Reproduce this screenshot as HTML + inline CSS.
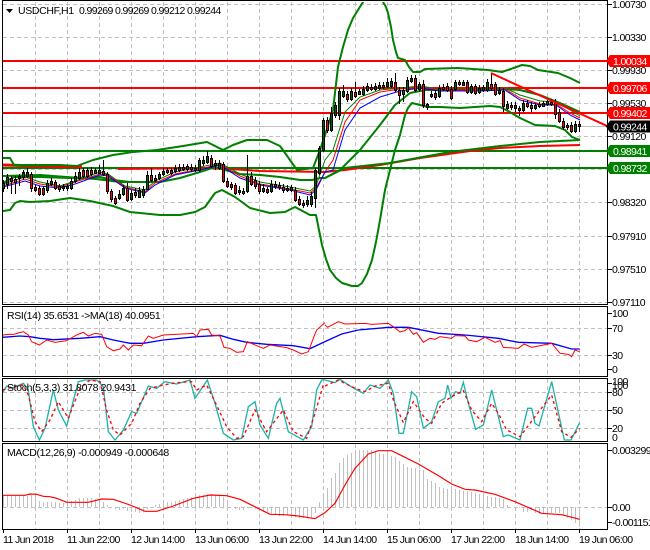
<!DOCTYPE html>
<html><head><meta charset="utf-8"><style>
html,body{margin:0;padding:0;background:#fff;width:650px;height:550px;overflow:hidden}
svg{display:block}
text{font-family:"Liberation Sans",sans-serif;font-size:10.5px;letter-spacing:-.6px;fill:#000}
.h{letter-spacing:-.35px}
.w{fill:#fff}
</style></head><body>
<svg width="650" height="550" viewBox="0 0 650 550" xmlns="http://www.w3.org/2000/svg" fill="none">
<defs>
<clipPath id="m"><rect x="3" y="2" width="604" height="301"/></clipPath>
<clipPath id="s"><rect x="3" y="379" width="604" height="62"/></clipPath>
<path id="up" d="M3.5 184V187M7.5 178V183M19.5 177V177M23.5 173V176M27.5 173V175M47.5 184V189M51.5 182V183M63.5 187V187M67.5 187V187M71.5 182V187M75.5 177V180M79.5 173V177M95.5 171V172M99.5 171V172M119.5 195V197M123.5 189V193M131.5 194V198M139.5 191V196M143.5 190V194M147.5 176V188M159.5 175V177M163.5 172V173M175.5 169V170M179.5 168V169M187.5 167V168M195.5 169V169M199.5 161V169M203.5 161V162M207.5 157V161M215.5 164V164M219.5 164V167M239.5 191V191M247.5 177V190M263.5 189V190M271.5 185V190M287.5 189V189M291.5 188V189M307.5 201V203M311.5 197V203M315.5 171V197M319.5 149V172M323.5 121V149M331.5 114V129M335.5 106V114M339.5 92V114M343.5 92V95M351.5 92V98M359.5 92V93M363.5 90V93M367.5 87V89M375.5 87V88M379.5 86V87M387.5 83V85M391.5 82V85M403.5 91V93M407.5 81V90M411.5 79V80M419.5 85V88M427.5 105V106M431.5 95V95M439.5 89V95M455.5 83V88M463.5 83V84M471.5 87V91M479.5 89V91M483.5 88V89M487.5 83V89M499.5 91V92M507.5 105V107M515.5 106V107M523.5 104V109M535.5 106V107M543.5 104V105M547.5 102V103M575.5 125V130"/>
<path id="dn" d="M11.5 179V180M15.5 180V181M31.5 175V187M35.5 188V189M39.5 189V193M43.5 189V193M55.5 183V187M59.5 187V188M83.5 171V175M87.5 171V175M91.5 171V173M103.5 172V173M107.5 175V190M111.5 192V198M115.5 199V202M127.5 189V199M135.5 193V194M151.5 176V179M155.5 179V179M167.5 171V171M171.5 171V172M183.5 168V168M191.5 168V168M211.5 159V165M223.5 165V180M227.5 182V185M231.5 185V186M235.5 186V192M243.5 192V192M251.5 177V183M255.5 181V185M259.5 185V190M267.5 190V191M275.5 185V185M279.5 186V186M283.5 188V189M295.5 191V199M299.5 200V203M303.5 204V204M327.5 121V129M347.5 95V98M355.5 93V95M371.5 88V88M383.5 86V86M395.5 83V89M399.5 91V94M415.5 79V89M423.5 85V104M435.5 94V96M443.5 88V88M447.5 87V89M451.5 90V97M459.5 83V83M467.5 83V91M475.5 87V92M491.5 85V87M495.5 85V93M503.5 92V105M511.5 106V106M519.5 109V109M527.5 104V105M531.5 106V107M539.5 105V105M551.5 103V103M555.5 103V113M559.5 113V120M563.5 122V126M567.5 126V126M571.5 126V130M579.5 125V125"/>
</defs>

<!-- grid -->
<path stroke="#c0c0c0" stroke-dasharray="4 3" d="M35.5 2V303M67.5 2V303M99.5 2V303M131.5 2V303M163.5 2V303M195.5 2V303M227.5 2V303M259.5 2V303M291.5 2V303M323.5 2V303M355.5 2V303M387.5 2V303M419.5 2V303M451.5 2V303M483.5 2V303M515.5 2V303M547.5 2V303M579.5 2V303
M35.5 307V376M67.5 307V376M99.5 307V376M131.5 307V376M163.5 307V376M195.5 307V376M227.5 307V376M259.5 307V376M291.5 307V376M323.5 307V376M355.5 307V376M387.5 307V376M419.5 307V376M451.5 307V376M483.5 307V376M515.5 307V376M547.5 307V376M579.5 307V376
M35.5 379V441M67.5 379V441M99.5 379V441M131.5 379V441M163.5 379V441M195.5 379V441M227.5 379V441M259.5 379V441M291.5 379V441M323.5 379V441M355.5 379V441M387.5 379V441M419.5 379V441M451.5 379V441M483.5 379V441M515.5 379V441M547.5 379V441M579.5 379V441
M35.5 444V529M67.5 444V529M99.5 444V529M131.5 444V529M163.5 444V529M195.5 444V529M227.5 444V529M259.5 444V529M291.5 444V529M323.5 444V529M355.5 444V529M387.5 444V529M419.5 444V529M451.5 444V529M483.5 444V529M515.5 444V529M547.5 444V529M579.5 444V529
M3 4.5H607M3 37.5H607M3 70.5H607M3 103.5H607M3 136.5H607M3 169.5H607M3 202.5H607M3 236.5H607M3 269.5H607M3 302.5H607
M3 328.5H607M3 355.5H607M3 392.5H607M3 410.5H607M3 428.5H607M3 507.5H607"/>
<path stroke="#c0c0c0" d="M3 126.5H607"/>

<g clip-path="url(#m)">
<!-- horizontal levels -->
<g stroke-width="2">
<path stroke="#f00" d="M3 61H607M3 88H607M3 113H607"/>
<path stroke="#008000" d="M3 151H607M3 168H607"/>
</g>
<!-- long MA lines -->
<polyline stroke="#f00" stroke-width="3" points="3,165 40,166 82,167"/>
<polyline stroke="#f00" stroke-width="2" points="118,169 200,168 230,169 260,171 325,172 345,170 380,165 420,158 470,151 500,148 540,146 580,145"/>
<polyline stroke="#008000" stroke-width="2" points="3,176 40,175 80,178 96,179 120,182 135,182"/>
<polyline stroke="#008000" stroke-width="2" points="325,178 345,168 390,163 450,152 500,146 540,142 580,140"/>
<!-- bands -->
<g stroke="#008000" stroke-width="2" stroke-linejoin="round">
<polyline points="3,158 10,158 14,165 40,165 60,165 77,166 93,160 113,155 133,152 157,150 183,146 207,142 217,147 223,150 233,145 247,140 267,140 280,146 290,160 297,170 313,168 320,150 325,135 333,110 338,67 343,47 348,30 353,18 358,10 363,2 365,-4"/>
<polyline points="381,-4 383,2 386,7 388,13 391,27 393,40 396,52 398,58 405,60 409,67 413,72 420,72 425,69 458,68 488,70 502,72 522,65 530,66 538,70 558,73 570,78 580,83"/>
<polyline points="3,211 10,210 15,203 20,201 30,202 50,201 70,198 90,201 113,206 130,212 160,215 180,215 195,212 205,207 215,193 222,190 235,197 250,208 270,213 285,212 295,207 310,215 316,215 319,230 322,245 326,259 330,270 336,278 342,283 352,286 358,286 362,283 367,274 372,260 376,242 380,220 385,190 390,170 395,150 400,135 405,115 408,108 412,103 420,105 428,107 440,107 460,108 490,106 500,107 508,111 520,118 535,125 555,126 565,130 572,137 580,140"/>
<polyline points="3,183 14,177 40,177 70,178 100,177 113,180 130,182 160,182 180,178 200,172 215,167 225,170 240,174 260,175 280,177 300,180 312,180 320,178 325,178 340,170 360,150 380,125 395,105 410,93 425,90 440,90 480,90 505,89 520,90 540,95 560,103 580,112"/>
</g>
<!-- thin MAs -->
<polyline stroke="#008000" points="3,184 25,177 40,182 60,186 75,181 100,172 108,174 125,186 145,190 155,181 175,172 200,167 220,163 240,174 260,182 290,187 310,191 316,186 325,160 333,150 345,112 360,97 380,90 400,88 420,86 440,89 480,89 505,88 520,95 540,101 556,102 570,110 580,116"/>
<polyline stroke="#f00" points="3,186 25,179 40,184 60,187 75,182 100,174 108,175 125,187 145,192 155,183 175,174 200,169 220,164 240,176 260,184 290,189 310,193 316,188 325,172 333,160 345,122 360,100 380,92 400,89 420,87 440,90 480,90 505,89 520,98 540,104 556,104 570,113 580,118"/>
<polyline stroke="#00f" points="3,187 25,181 40,186 60,188 75,184 100,175 108,176 125,188 145,193 155,185 175,175 200,170 220,165 240,178 260,185 290,190 310,195 316,190 325,172 333,170 345,130 360,108 380,97 400,91 420,88 440,91 480,91 505,90 520,100 540,105 556,105 570,115 580,120"/>
<!-- candle wicks -->
<path stroke="#000" d="M3.5 180V192M7.5 174V189M11.5 176V194M15.5 176V194M19.5 174V186M23.5 170V180M27.5 168V178M31.5 172V192M35.5 185V192M39.5 186V196M43.5 186V196M47.5 180V193M51.5 178V186M55.5 180V190M59.5 184V192M63.5 184V191M67.5 184V191M71.5 178V190M75.5 172V183M79.5 168V180M83.5 168V178M87.5 168V178M91.5 167V176M95.5 168V174M99.5 165V174M103.5 160V176M107.5 172V194M111.5 189V202M115.5 196V205M119.5 190V200M123.5 185V196M127.5 183V202M131.5 190V201M135.5 188V198M139.5 187V198M143.5 186V198M147.5 171V190M151.5 168V182M155.5 175V182M159.5 172V180M163.5 168V176M167.5 168V174M171.5 168V175M175.5 165V173M179.5 164V172M183.5 164V171M187.5 164V171M191.5 164V172M195.5 165V172M199.5 158V172M203.5 156V166M207.5 151V164M211.5 155V168M215.5 160V170M219.5 160V170M223.5 162V183M227.5 178V188M231.5 182V190M235.5 183V195M239.5 186V195M243.5 188V195M247.5 155V193M251.5 172V186M255.5 177V189M259.5 181V194M263.5 184V193M267.5 187V194M271.5 180V193M275.5 181V189M279.5 182V190M283.5 184V193M287.5 185V192M291.5 185V192M295.5 187V202M299.5 196V206M303.5 200V208M307.5 196V207M311.5 192V207M315.5 168V208M319.5 146V175M323.5 118V152M327.5 117V133M331.5 107V132M335.5 102V118M339.5 88V120M343.5 85V98M347.5 91V102M351.5 88V101M355.5 82V98M359.5 89V95M363.5 86V96M367.5 83V92M371.5 84V91M375.5 83V91M379.5 82V90M383.5 82V89M387.5 78V88M391.5 78V88M395.5 73V92M399.5 87V104M403.5 87V102M407.5 77V93M411.5 75V83M415.5 75V92M419.5 82V92M423.5 80V108M427.5 103V110M431.5 91V98M435.5 90V100M439.5 85V98M443.5 84V91M447.5 83V92M451.5 86V100M455.5 80V91M459.5 80V86M463.5 80V86M467.5 80V94M471.5 84V94M475.5 84V95M479.5 85V94M483.5 85V92M487.5 79V92M491.5 73V90M495.5 82V96M499.5 87V95M503.5 88V112M507.5 101V110M511.5 102V110M515.5 102V112M519.5 106V116M523.5 100V112M527.5 100V108M531.5 102V112M535.5 103V110M539.5 102V108M543.5 101V107M547.5 98V106M551.5 99V106M555.5 99V119M559.5 109V123M563.5 118V130M567.5 123V130M571.5 122V133M575.5 121V133M579.5 121V132"/>
<g transform="translate(0,.5)" stroke-linecap="square">
<use href="#up" stroke="#000" stroke-width="3"/>
<use href="#dn" stroke="#000" stroke-width="3"/>
<use href="#up" stroke="#006000"/>
<use href="#dn" stroke="#f00"/>
</g>
<polyline stroke="#f00" stroke-width="2" points="491,73 530,91 570,109 607,126"/>
</g>

<!-- RSI -->
<g transform="translate(0,300) scale(.33333)" stroke-width="3">
<polyline stroke="#00f" stroke-width="4" points="8,112 60,108 90,110 120,115 160,119 240,115 300,110 340,120 390,130 430,130 490,120 590,110 660,106 700,118 740,127 800,133 880,137 930,146 975,125"/>
<polyline stroke="#f00" points="8,105 25,103 40,103 70,95 85,105 95,125 118,135 140,120 165,127 200,122 230,105 250,97 265,108 285,100 305,103 320,140 340,152 360,147 370,135 385,150 400,135 425,137 445,108 460,115 490,105 580,100 590,110 600,90 625,88 635,105 660,108 672,142 690,145 710,157 730,155 742,125 770,137 790,145 810,135 860,143 880,150 905,162 925,155 940,115 950,90 975,68"/>
</g>
<g transform="translate(325,300) scale(.33333)" stroke-width="3">
<polyline stroke="#00f" stroke-width="4" points="0,125 50,102 100,90 190,82 250,82 340,100 420,105 520,115 580,127 680,130 740,147 764,147"/>
<polyline stroke="#f00" points="0,75 8,82 40,65 60,72 120,70 140,73 190,70 205,80 225,96 240,92 250,83 265,103 275,98 295,127 315,115 330,118 345,110 380,115 390,107 420,108 430,120 455,125 480,112 510,127 525,122 535,142 580,145 597,132 620,142 680,130 705,160 730,163 740,170 750,150 764,155"/>
</g>

<!-- Stoch -->
<g clip-path="url(#s)">
<g transform="translate(0,300) scale(.33333)" stroke-width="4">
<polyline stroke="#20b2aa" points="8,278 20,258 35,265 70,250 85,270 100,380 118,420 135,385 160,270 175,330 200,378 235,245 255,240 290,240 310,260 325,395 345,420 370,390 395,335 410,340 445,258 470,265 495,245 530,252 570,240 585,295 605,265 622,240 645,310 670,400 700,420 725,415 745,320 765,305 780,375 805,415 830,310 840,295 865,395 910,420 935,380 950,270 965,240 975,240"/>
<polyline stroke="#f00" stroke-dasharray="9 9" points="8,270 40,260 70,255 85,285 105,365 125,395 150,360 175,305 205,355 240,265 270,240 300,245 320,330 340,390 360,405 395,370 420,310 450,265 490,255 530,248 575,245 590,270 620,255 640,295 680,380 710,415 730,410 765,330 800,395 850,330 880,395 920,415 945,340 970,255"/>
</g>
<g transform="translate(325,300) scale(.33333)" stroke-width="4">
<polyline stroke="#20b2aa" points="0,240 30,248 45,238 75,258 115,280 135,255 165,265 190,240 205,280 222,400 235,400 260,275 275,290 295,385 320,365 340,305 360,295 368,255 378,295 392,275 405,280 415,247 430,310 452,388 475,375 500,270 535,410 550,405 585,420 608,325 620,325 630,370 642,378 680,245 718,420 738,420 764,368"/>
<polyline stroke="#f00" stroke-dasharray="9 9" points="0,258 40,240 90,265 120,275 150,258 190,250 205,300 235,368 265,305 300,355 320,370 350,310 380,290 415,272 440,330 470,365 500,310 520,340 545,390 585,410 630,350 680,285 710,395 738,412 764,385"/>
</g>
</g>

<!-- MACD histogram -->
<path stroke="#c0c0c0" d="M3.5 507V496M7.5 507V496M11.5 507V496M15.5 507V496M19.5 507V496M23.5 507V496M27.5 507V496M31.5 507V495M35.5 507V497M39.5 507V501M43.5 507V502M47.5 507V502M51.5 507V502M55.5 507V502M59.5 507V503M63.5 507V503M67.5 507V502M71.5 507V501M75.5 507V500M79.5 507V498M83.5 507V498M87.5 507V498M91.5 507V498M95.5 507V499M99.5 507V499M103.5 507V502M107.5 507V505M111.5 507V507M115.5 507V509M119.5 507V510M123.5 507V509M127.5 507V511M131.5 507V512M135.5 507V512M139.5 507V513M143.5 507V512M147.5 507V509M151.5 507V507M155.5 507V505M159.5 507V504M163.5 507V503M167.5 507V502M171.5 507V502M175.5 507V501M179.5 507V500M183.5 507V499M187.5 507V498M191.5 507V497M195.5 507V496M199.5 507V495M203.5 507V495M207.5 507V494M211.5 507V494M215.5 507V495M219.5 507V496M223.5 507V497M227.5 507V504M231.5 507V507M235.5 507V509M239.5 507V510M243.5 507V510M247.5 507V508M251.5 507V508M255.5 507V509M259.5 507V510M263.5 507V512M267.5 507V513M271.5 507V514M275.5 507V515M279.5 507V516M283.5 507V516M287.5 507V515M291.5 507V516M295.5 507V517M299.5 507V518M303.5 507V518M307.5 507V518M311.5 507V518M315.5 507V513M319.5 507V502M323.5 507V497M327.5 507V488M331.5 507V478M335.5 507V473M339.5 507V463M343.5 507V458M347.5 507V455M351.5 507V453M355.5 507V450M359.5 507V450M363.5 507V450M367.5 507V450M371.5 507V450M375.5 507V451M379.5 507V453M383.5 507V454M387.5 507V454M391.5 507V456M395.5 507V457M399.5 507V461M403.5 507V464M407.5 507V467M411.5 507V468M415.5 507V468M419.5 507V470M423.5 507V470M427.5 507V479M431.5 507V481M435.5 507V483M439.5 507V487M443.5 507V488M447.5 507V489M451.5 507V489M455.5 507V489M459.5 507V490M463.5 507V491M467.5 507V491M471.5 507V492M475.5 507V493M479.5 507V494M483.5 507V495M487.5 507V496M491.5 507V497M495.5 507V497M499.5 507V498M503.5 507V499M507.5 507V505M511.5 507V507M515.5 507V507M519.5 507V508M523.5 507V512M527.5 507V512M531.5 507V510M535.5 507V513M539.5 507V514M543.5 507V514M547.5 507V513M551.5 507V513M555.5 507V513M559.5 507V513M563.5 507V515M567.5 507V518M571.5 507V520M575.5 507V523M579.5 507V527"/>
<g stroke="#f00">
<polyline transform="translate(0,440) scale(.33333)" stroke-width="3.5" points="8,166 75,166 90,162 110,163 130,169 150,170 170,175 200,187 265,187 305,177 340,178 390,195 435,214 470,214 520,198 580,175 630,165 680,167 720,178 780,208 810,223 855,224 895,228 945,236 975,218"/>
<polyline transform="translate(325,440) scale(.33333)" stroke-width="3.5" points="0,218 30,190 60,135 90,85 130,42 160,32 200,32 230,47 280,72 340,107 380,132 420,148 450,150 510,163 570,185 650,220 710,224 764,238"/>
</g>

<!-- frames -->
<g stroke="#000">
<path d="M2.500 0V304M2.500 306V376M2.500 378V441M2.500 443V529M607.500 0V304M607.500 306V376M607.500 378V441M607.500 443V529"/>
<path d="M2 304.500H608M2 306.500H608M2 376.500H608M2 378.500H608M2 441.500H608M2 443.500H608"/>
<path d="M2 529.500H608M2 0.500H608"/>
<path d="M608 4.500H612M608 37.500H612M608 70.500H612M608 103.500H612M608 136.500H612M608 202.500H612M608 236.500H612M608 269.500H612M608 302.500H612M608 313.500H612M608 328.500H612M608 355.500H612M608 369.500H612M608 383.500H612M608 392.500H612M608 410.500H612M608 428.500H612M608 450.500H612M608 507.500H612M608 522.500H612"/>
<path d="M3.500 529V533M67.500 529V533M131.500 529V533M195.500 529V533M259.500 529V533M323.500 529V533M387.500 529V533M451.500 529V533M515.500 529V533M579.500 529V533"/>
</g>

<!-- header triangle -->
<path d="M6 9H13L9.500 13Z" fill="#000"/>

<!-- pane labels -->
<text class="h" x="18" y="14">USDCHF,H1</text>
<text x="79" y="14">0.99269</text>
<text x="115" y="14">0.99269</text>
<text x="151" y="14">0.99212</text>
<text x="187" y="14">0.99244</text>
<text class="h" x="7" y="319">RSI(14) 35.6531</text>
<text class="h" x="81" y="319">-&gt;MA(18) 40.0951</text>
<text class="h" x="7" y="391">Stoch(5,3,3) 31.8078 20.9431</text>
<text class="h" x="7" y="456">MACD(12,26,9) -0.000949 -0.000648</text>

<!-- right axis -->
<text x="612" y="8">1.00730</text>
<text x="612" y="41">1.00330</text>
<text x="612" y="74">0.99930</text>
<text x="612" y="107">0.99530</text>
<text x="612" y="140">0.99120</text>
<text x="612" y="206">0.98320</text>
<text x="612" y="240">0.97910</text>
<text x="612" y="273">0.97510</text>
<text x="612" y="306">0.97110</text>

<path fill="#f00" d="M606 61L610 55H650V67H610ZM606 88L610 82H650V94H610ZM606 113L610 107H650V119H610Z"/>
<path fill="#000" d="M606 126.500L610 120.500H650V132.500H610Z"/>
<path fill="#008000" d="M606 151L610 145H650V157H610ZM606 168L610 162H650V174H610Z"/>
<text class="w" x="613" y="65">1.00034</text>
<text class="w" x="613" y="92">0.99706</text>
<text class="w" x="613" y="117">0.99402</text>
<text class="w" x="613" y="130.500">0.99244</text>
<text class="w" x="613" y="155">0.98941</text>
<text class="w" x="613" y="172">0.98732</text>

<text x="612" y="317">100</text>
<text x="612" y="332">70</text>
<text x="612" y="359">30</text>
<text x="612" y="373">0</text>
<text x="612" y="385">100</text>
<text x="612" y="389">100</text>
<text x="612" y="396">80</text>
<text x="612" y="414">50</text>
<text x="612" y="432">20</text>
<text x="612" y="441">0</text>
<text x="612" y="454">0.003299</text>
<text x="612" y="511">0.00</text>
<text x="612" y="526">-0.001151</text>

<!-- bottom axis -->
<text x="3" y="543">11 Jun 2018</text>
<text x="67" y="543">11 Jun 22:00</text>
<text x="131" y="543">12 Jun 14:00</text>
<text x="195" y="543">13 Jun 06:00</text>
<text x="259" y="543">13 Jun 22:00</text>
<text x="323" y="543">14 Jun 14:00</text>
<text x="387" y="543">15 Jun 06:00</text>
<text x="451" y="543">17 Jun 22:00</text>
<text x="515" y="543">18 Jun 14:00</text>
<text x="579" y="543">19 Jun 06:00</text>
</svg>
</body></html>
